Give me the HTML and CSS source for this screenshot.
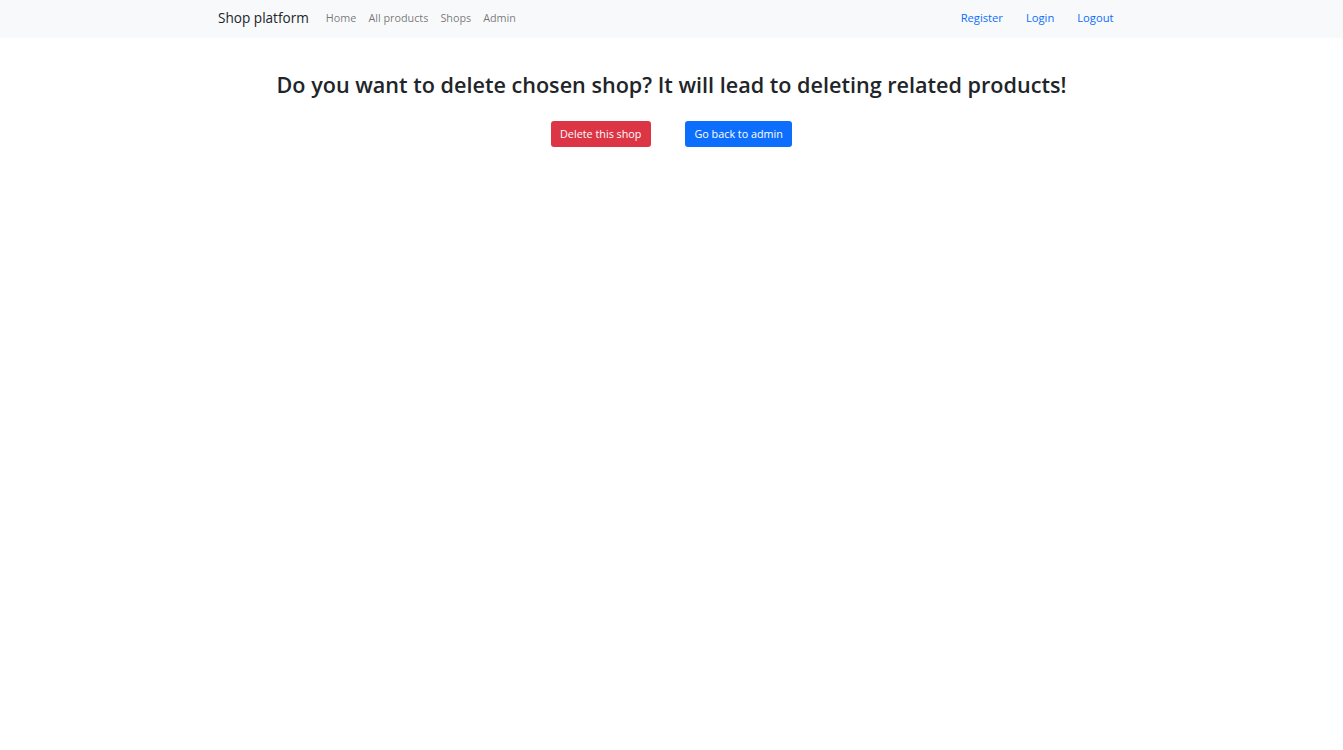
FILE: index.html
```html
<!DOCTYPE html>
<html lang="en">
<head>
<meta charset="utf-8">
<title>Shop platform</title>
<link rel="stylesheet" href="styles.css">
</head>
<body>
<nav class="navbar">
  <div class="nav-inner">
    <a class="brand" href="#">Shop platform</a>
    <ul class="nav-left">
      <li><a href="#">Home</a></li>
      <li><a href="#">All products</a></li>
      <li><a href="#">Shops</a></li>
      <li><a href="#">Admin</a></li>
    </ul>
    <ul class="nav-right">
      <li><a href="#">Register</a></li>
      <li><a href="#">Login</a></li>
      <li><a href="#">Logout</a></li>
    </ul>
  </div>
</nav>
<main class="content">
  <h1 class="title">Do you want to delete chosen shop? It will lead to deleting related products!</h1>
  <div class="actions">
    <a class="btn btn-danger" href="#">Delete this shop</a>
    <a class="btn btn-primary" href="#">Go back to admin</a>
  </div>
</main>
</body>
</html>
```
FILE: styles.css
```css
* { box-sizing: border-box; }
html, body { margin: 0; padding: 0; background: #fff; }
body {
  font-family: "Open Sans", "Noto Sans", sans-serif;
  color: #212529;
}
a { text-decoration: none; }
.navbar {
  background: #f8f9fa;
  height: 38px;
}
.nav-inner {
  width: 907px;
  margin: 0 auto;
  height: 100%;
  display: flex;
  align-items: center;
  padding-bottom: 3px;
}
.brand {
  font-size: 13.6px;
  color: #212529;
  margin-right: 11px;
}
ul { list-style: none; margin: 0; padding: 0; display: flex; }
.nav-left a {
  display: block;
  font-size: 10.8px;
  padding: 0 6px;
  color: rgba(0,0,0,.55);
}
.nav-right { margin-left: auto; }
.nav-right a {
  display: block;
  font-size: 11.2px;
  padding: 0 11.5px;
  color: #0d6efd;
}
.content { text-align: center; }
.title {
  font-size: 21.6px;
  font-weight: 600;
  margin: 33px 0 22px;
  line-height: 28px;
}
.actions {
  display: flex;
  justify-content: center;
  gap: 34px;
}
.btn {
  display: inline-block;
  height: 26px;
  line-height: 26px;
  padding: 0 9.5px;
  font-size: 10.8px;
  color: #fff;
  border-radius: 3px;
}
.btn-danger { background: #dc3545; }
.btn-primary { background: #0d6efd; }
```
